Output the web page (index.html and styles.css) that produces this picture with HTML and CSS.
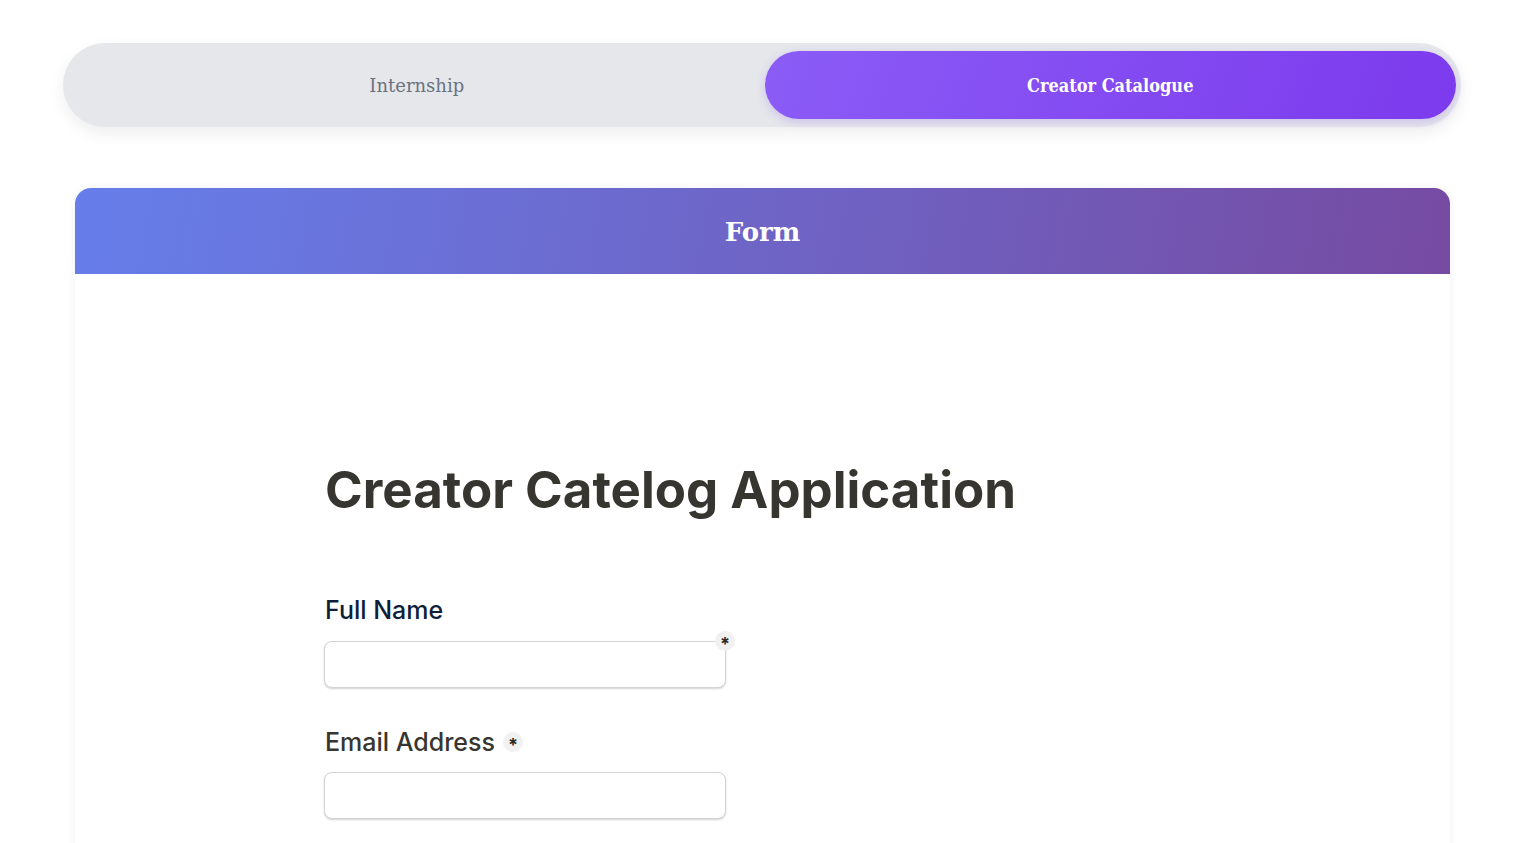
FILE: index.html
```html
<!DOCTYPE html>
<html lang="en">
<head>
<meta charset="utf-8">
<title>Creator Catalogue</title>
<link rel="stylesheet" href="styles.css">
</head>
<body>
<div class="page">
  <nav class="tabs">
    <button class="tab">Internship</button>
    <button class="tab tab-active">Creator Catalogue</button>
  </nav>

  <section class="card">
    <header class="card-header">Form</header>
    <div class="card-body">
      <h1 class="form-title">Creator Catelog Application</h1>

      <div class="field">
        <label class="field-label field-label-focus">Full Name</label>
        <div class="input-wrap">
          <input class="input" type="text">
          <span class="req req-corner">*</span>
        </div>
      </div>

      <div class="field">
        <label class="field-label field-label-tight">Email Address <span class="req">*</span></label>
        <div class="input-wrap">
          <input class="input" type="email">
        </div>
      </div>
    </div>
  </section>
</div>
</body>
</html>
```

FILE: styles.css
```css
html, body {
  margin: 0;
  padding: 0;
  background: #ffffff;
  overflow: hidden;
}

.page {
  width: 1525px;
  padding-top: 43px;
}

.tabs {
  margin-left: 63px;
  width: 1398px;
  height: 84px;
  box-sizing: border-box;
  padding: 8px 5px 8px 8px;
  gap: 2px;
  display: flex;
  background: #e5e7eb;
  border-radius: 42px;
  box-shadow: 0 6px 16px rgba(0, 0, 0, 0.07);
}

.tab {
  flex: 1;
  border: none;
  background: transparent;
  border-radius: 34px;
  font-family: "DejaVu Serif", "Liberation Serif", serif;
  font-size: 18px;
  color: #6b7280;
  cursor: pointer;
  padding: 0;
}

.tab-active {
  background: linear-gradient(110deg, #8b5cf6 0%, #7c3aed 100%);
  color: #ffffff;
  font-weight: 700;
  font-stretch: condensed;
  box-shadow: 0 3px 10px rgba(124, 58, 237, 0.22);
}

.card {
  margin-left: 75px;
  margin-top: 61px;
  width: 1375px;
  background: #ffffff;
  border-radius: 16px 16px 0 0;
  box-shadow: 0 0 8px rgba(0, 0, 0, 0.06);
  min-height: 700px;
}

.card-header {
  height: 86px;
  display: flex;
  align-items: center;
  justify-content: center;
  background: linear-gradient(100deg, #667eea 0%, #764ba2 100%);
  border-radius: 16px 16px 0 0;
  color: #ffffff;
  font-family: "DejaVu Serif", "Liberation Serif", serif;
  font-weight: 700;
  font-size: 26px;
  padding-top: 2px;
  box-sizing: border-box;
}

.card-body {
  padding: 185px 0 0 250px;
}

.form-title {
  margin: 0 0 73px 0;
  font-family: Inter, "Liberation Sans", sans-serif;
  font-weight: 700;
  font-size: 51px;
  line-height: 1.2;
  color: #37352f;
}

.field {
  margin-bottom: 37px;
}

.field-label {
  display: flex;
  align-items: center;
  gap: 8px;
  font-family: Inter, "Liberation Sans", sans-serif;
  font-size: 25px;
  font-weight: 500;
  line-height: 34px;
  color: #37352f;
  margin-bottom: 14px;
}

.field-label-focus {
  color: #0f1f3a;
}

.field-label-tight {
  margin-bottom: 13px;
}

.input-wrap {
  position: relative;
  width: 402px;
  margin-left: -1px;
}

.input {
  display: block;
  width: 402px;
  height: 47px;
  box-sizing: border-box;
  border: 1px solid #d4d4d4;
  border-radius: 8px;
  box-shadow: 0 1px 2px rgba(0, 0, 0, 0.18);
  background: #ffffff;
  outline: none;
}

.req {
  display: inline-flex;
  align-items: center;
  justify-content: center;
  width: 20px;
  height: 20px;
  border-radius: 50%;
  background: #f1f1f1;
  color: #2b2a26;
  font-family: Inter, "Liberation Sans", sans-serif;
  font-size: 18px;
  font-weight: 700;
  line-height: 1;
  padding-top: 6px;
  box-sizing: border-box;
}

.req-corner {
  position: absolute;
  top: -10px;
  right: -9px;
}
```
